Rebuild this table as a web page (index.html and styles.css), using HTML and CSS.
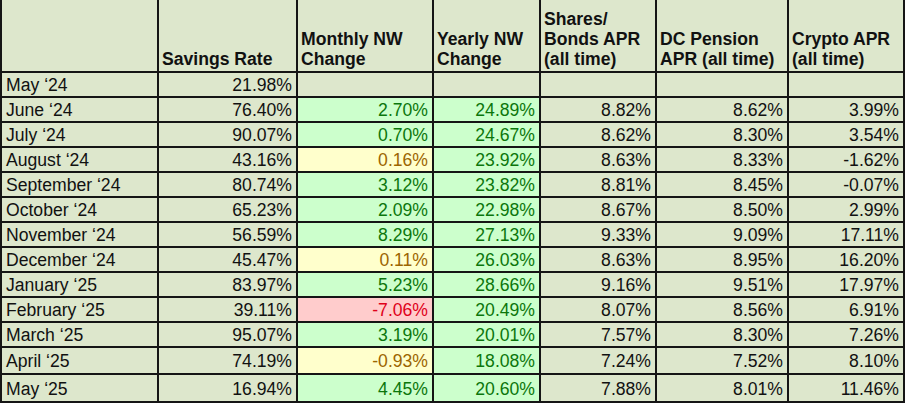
FILE: index.html
```html
<!DOCTYPE html>
<html>
<head>
<meta charset="utf-8">
<link rel="stylesheet" href="styles.css">
</head>
<body>
<table class="sheet">
  <colgroup>
    <col class="c-month"><col class="c-save"><col class="c-mon"><col class="c-year"><col class="c-shares"><col class="c-dc"><col class="c-crypto">
  </colgroup>
  <thead>
    <tr class="head">
      <th></th>
      <th>Savings Rate</th>
      <th>Monthly NW<br>Change</th>
      <th>Yearly NW<br>Change</th>
      <th>Shares/<br>Bonds APR<br>(all time)</th>
      <th>DC Pension<br>APR (all time)</th>
      <th>Crypto APR<br>(all time)</th>
    </tr>
  </thead>
  <tbody>
    <tr><td class="lbl">May ‘24</td><td>21.98%</td><td></td><td></td><td></td><td></td><td></td></tr>
    <tr><td class="lbl">June ‘24</td><td>76.40%</td><td class="good">2.70%</td><td class="good">24.89%</td><td>8.82%</td><td>8.62%</td><td>3.99%</td></tr>
    <tr><td class="lbl">July ‘24</td><td>90.07%</td><td class="good">0.70%</td><td class="good">24.67%</td><td>8.62%</td><td>8.30%</td><td>3.54%</td></tr>
    <tr><td class="lbl">August ‘24</td><td>43.16%</td><td class="neutral">0.16%</td><td class="good">23.92%</td><td>8.63%</td><td>8.33%</td><td>-1.62%</td></tr>
    <tr><td class="lbl">September ‘24</td><td>80.74%</td><td class="good">3.12%</td><td class="good">23.82%</td><td>8.81%</td><td>8.45%</td><td>-0.07%</td></tr>
    <tr><td class="lbl">October ‘24</td><td>65.23%</td><td class="good">2.09%</td><td class="good">22.98%</td><td>8.67%</td><td>8.50%</td><td>2.99%</td></tr>
    <tr><td class="lbl">November ‘24</td><td>56.59%</td><td class="good">8.29%</td><td class="good">27.13%</td><td>9.33%</td><td>9.09%</td><td>17.11%</td></tr>
    <tr><td class="lbl">December ‘24</td><td>45.47%</td><td class="neutral">0.11%</td><td class="good">26.03%</td><td>8.63%</td><td>8.95%</td><td>16.20%</td></tr>
    <tr><td class="lbl">January ‘25</td><td>83.97%</td><td class="good">5.23%</td><td class="good">28.66%</td><td>9.16%</td><td>9.51%</td><td>17.97%</td></tr>
    <tr><td class="lbl">February ‘25</td><td>39.11%</td><td class="bad">-7.06%</td><td class="good">20.49%</td><td>8.07%</td><td>8.56%</td><td>6.91%</td></tr>
    <tr><td class="lbl">March ‘25</td><td>95.07%</td><td class="good">3.19%</td><td class="good">20.01%</td><td>7.57%</td><td>8.30%</td><td>7.26%</td></tr>
    <tr class="tall"><td class="lbl">April ‘25</td><td>74.19%</td><td class="neutral">-0.93%</td><td class="good">18.08%</td><td>7.24%</td><td>7.52%</td><td>8.10%</td></tr>
    <tr class="tall last"><td class="lbl">May ‘25</td><td>16.94%</td><td class="good">4.45%</td><td class="good">20.60%</td><td>7.88%</td><td>8.01%</td><td>11.46%</td></tr>
  </tbody>
</table>
</body>
</html>
```
FILE: styles.css
```css
html, body {
  margin: 0;
  padding: 0;
  background: #ffffff;
}

.sheet {
  border-collapse: collapse;
  table-layout: fixed;
  width: 903px;
  font-family: "Liberation Sans", Arial, sans-serif;
  font-size: 17.6px;
  color: #111111;
  background: #dde7cc;
}

.c-month { width: 157px; }
.c-save { width: 139px; }
.c-mon { width: 136px; }
.c-year { width: 107px; }
.c-shares { width: 116px; }
.c-dc { width: 132px; }
.c-crypto { width: 116px; }

.sheet th,
.sheet td {
  border: 2px solid #151515;
  padding: 0 4px;
  overflow: hidden;
  white-space: nowrap;
}

.head th {
  border-top: none;
  height: 72px;
  box-sizing: border-box;
  text-align: left;
  vertical-align: bottom;
  font-weight: bold;
  line-height: 20px;
  padding: 0 3px 2px 3px;
}

.sheet tbody tr {
  height: 25px;
}

.sheet tbody tr.tall {
  height: 27px;
}

.sheet tbody tr.last {
  height: 28px;
}

.sheet td {
  text-align: right;
  line-height: 20px;
  padding-top: 1px;
}

.sheet td.lbl {
  text-align: left;
}

.sheet td.good {
  background: #ccffcc;
  color: #0b760b;
}

.sheet td.neutral {
  background: #ffffcc;
  color: #9c6500;
}

.sheet td.bad {
  background: #ffcccc;
  color: #e0001a;
}
```
